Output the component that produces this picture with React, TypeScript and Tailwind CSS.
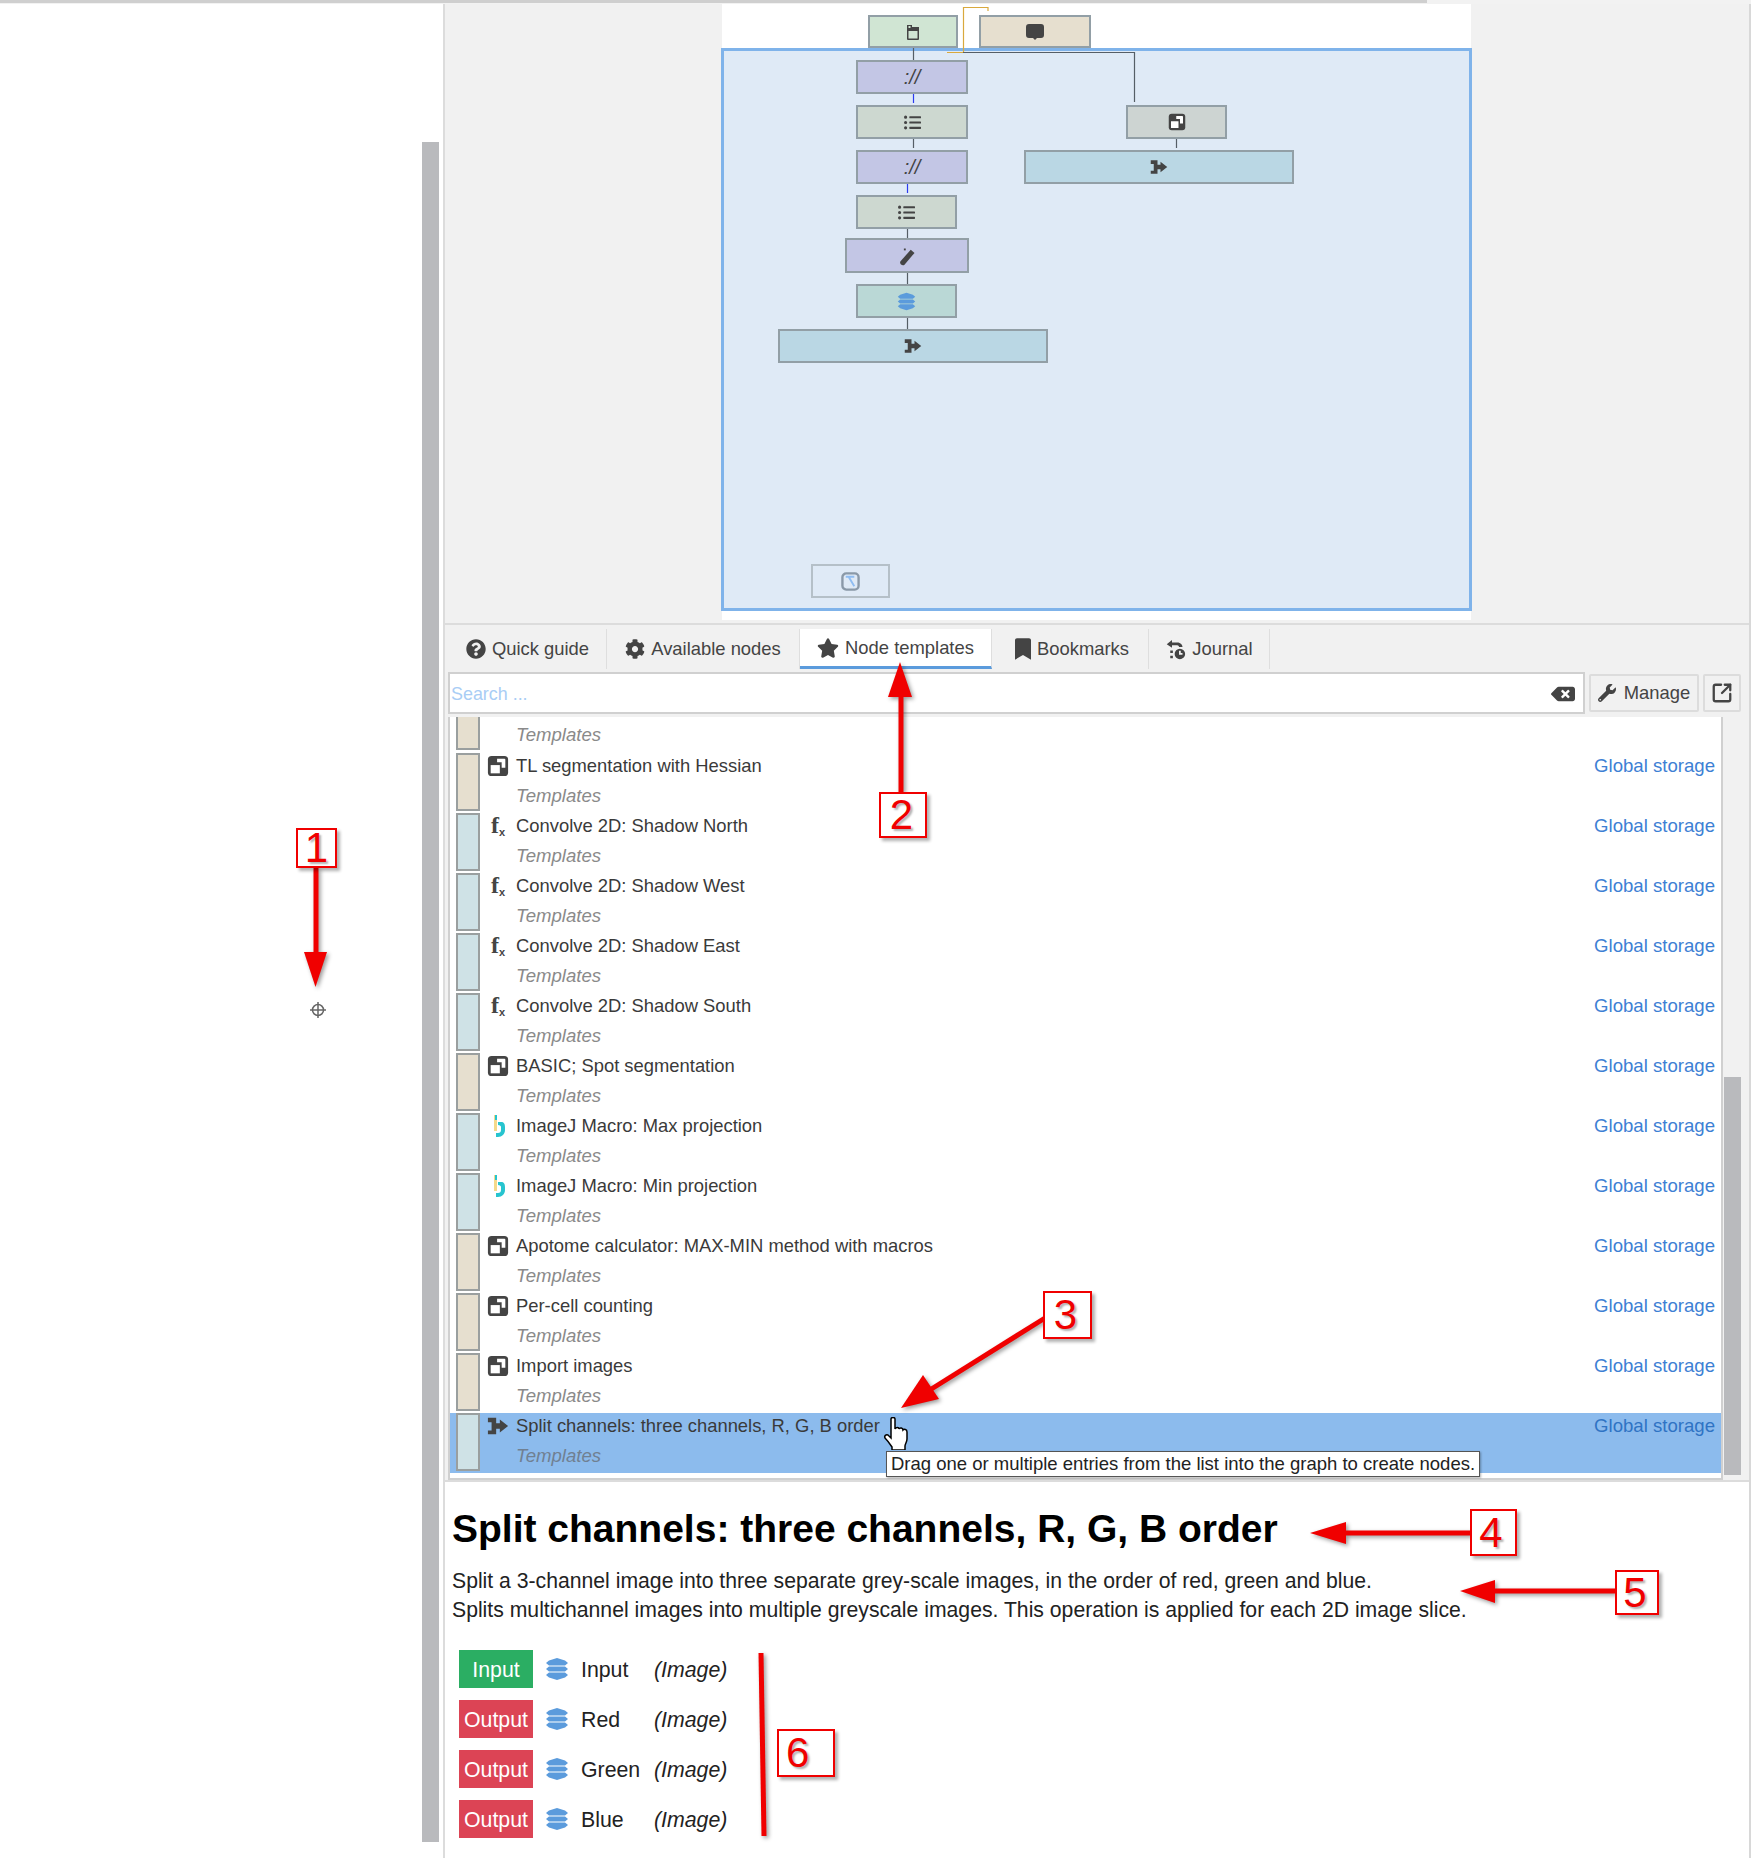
import React from "react";
import {
  FaQuestionCircle,
  FaCog,
  FaStar,
  FaBookmark,
  FaWrench,
  FaBackspace,
  FaListUl,
} from "react-icons/fa";
import { SquareArrowOutUpRight } from "lucide-react";

function GroupIcon({ className }: { className?: string }) {
  return (
    <svg viewBox="0 0 24 24" className={className}>
      <rect x="1" y="1" width="22" height="22" rx="4" fill="currentColor" />
      <path d="M4 11h10v9H4z" fill="#fff" />
      <path d="M11 4h8a1 1 0 0 1 1 1v9h-4V8h-5z" fill="#fff" />
    </svg>
  );
}

function SplitIcon({ className }: { className?: string }) {
  return (
    <svg viewBox="0 0 24 24" className={className}>
      <path
        d="M1 3h9v6h4V5l9 7-9 7v-4h-4v6H1v-4h4V8H1z"
        fill="currentColor"
      />
    </svg>
  );
}

function StackIcon({ className }: { className?: string }) {
  return (
    <svg viewBox="0 0 24 24" className={className}>
      <path d="M12 1l8 2.500L23 6l-3 2.500H4L1 6l3-2.500z" fill="#5b9bdc" />
      <path d="M4 9.500h16l3 2.500-3 2.500H4L1 12z" fill="#5b9bdc" />
      <path d="M4 15.500h16l3 2.500-3 2.500L12 23l-8-2.500L1 18z" fill="#5b9bdc" />
    </svg>
  );
}

function WandIcon() {
  return (
    <svg viewBox="0 0 16 16" className="w-[20px] h-[20px] text-[#444]">
      <path d="M11 3l3 2.500-8 9.500c-1 .8-2 .5-3-.4-.7-.8-.8-1.700 0-2.600z" fill="currentColor" />
      <path d="M5.500 2h1.500v1.500H5.500z" fill="currentColor" />
    </svg>
  );
}

function FxIcon() {
  return (
    <span className="relative block w-[21px] h-[24px] text-[#444]">
      <span className="absolute left-[4px] -top-[1px] text-[24px] leading-[24px] font-['Liberation_Serif',serif] font-bold">
        f
      </span>
      <span className="absolute left-[12px] top-[13px] text-[11px] leading-[11px] font-bold">
        x
      </span>
    </span>
  );
}

function MacroIcon() {
  return (
    <svg viewBox="0 0 21 24" className="w-[21px] h-[24px]">
      <path d="M7 1h3v16H7z" fill="#f5d98a" />
      <path d="M11 8h3c3 0 4 2 4 5v3c0 4-3 7-7 7H9v-4h2c2 0 3-1 3-3v-3c0-1-1-2-3-2z" fill="#27c4cf" />
      <path d="M8 1h2v5H8z" fill="#27c4cf" />
    </svg>
  );
}

function JournalIcon() {
  return (
    <svg viewBox="0 0 24 24" className="w-[21px] h-[21px] text-[#444]">
      <path d="M2 6l6-5v3h6c4 0 6 3 6 5h-4c0-1-1-2-2-2H8v3z" fill="currentColor" />
      <path d="M6 13h3v3H6zM6 19h3v3H6z" fill="currentColor" />
      <circle cx="17" cy="17" r="6" fill="currentColor" />
      <path d="M16 13.500h2V16h2v2h-4z" fill="#f2f2f2" />
    </svg>
  );
}

function FileIcon() {
  return (
    <svg viewBox="0 0 16 16" className="w-[16px] h-[16px] text-[#444]">
      <path d="M2 1h5v2h7v12a1 1 0 0 1-1 1H3a1 1 0 0 1-1-1z" fill="currentColor" />
      <path d="M3.500 7h9v7.500h-9z" fill="#d0e5d3" />
      <path d="M3.500 2h2v2h-2z" fill="#d0e5d3" />
    </svg>
  );
}

function CommentIcon() {
  return (
    <svg viewBox="0 0 18 16" className="w-[18px] h-[16px] text-[#444]">
      <path d="M3 0h12a3 3 0 0 1 3 3v8a3 3 0 0 1-3 3h-4l-2 2-2-2H3a3 3 0 0 1-3-3V3a3 3 0 0 1 3-3z" fill="currentColor" />
    </svg>
  );
}

function GraphNode({ className, children }: { className: string; children?: React.ReactNode }) {
  return (
    <div className={`absolute flex items-center justify-center border-2 border-[#929fa6] text-[#444] ${className}`}>
      {children}
    </div>
  );
}

function Canvas() {
  return (
    <div className="relative w-[749px] h-[616px] bg-white ml-[277px]">
      <div className="absolute -left-[1px] top-[44px] w-[751px] h-[563px] border-[3px] border-[#7fb3ea] bg-[#dfeaf6]" />
      <svg className="absolute left-0 top-0 w-[749px] h-[616px]" fill="none">
        <path d="M241.500 48.500V3.500H266V7M225 48.500h16" stroke="#d9a93d" strokeWidth="1.200" />
        <path d="M191.500 44v12M191.500 135v9M185.500 225v10M185.500 268v12M185.500 313v12M454.500 135v9M241 48.500h171.500V98" stroke="#555e66" strokeWidth="1.200" />
        <path d="M191.500 90v9M185.500 180v9" stroke="#2b3bf0" strokeWidth="1.200" />
      </svg>
      <GraphNode className="left-[146px] top-[11px] w-[90px] h-[33px] bg-[#d0e5d3]"><FileIcon /></GraphNode>
      <GraphNode className="left-[257px] top-[11px] w-[112px] h-[33px] bg-[#e6dfcf]"><CommentIcon /></GraphNode>
      <GraphNode className="left-[134px] top-[56px] w-[112px] h-[34px] bg-[#c3c6e5]"><span className="text-[20px] italic">://</span></GraphNode>
      <GraphNode className="left-[134px] top-[101px] w-[112px] h-[34px] bg-[#cdd8d0]"><FaListUl className="w-[17px] h-[17px]" /></GraphNode>
      <GraphNode className="left-[134px] top-[146px] w-[112px] h-[34px] bg-[#c3c6e5]"><span className="text-[20px] italic">://</span></GraphNode>
      <GraphNode className="left-[134px] top-[191px] w-[101px] h-[34px] bg-[#cdd8d0]"><FaListUl className="w-[17px] h-[17px]" /></GraphNode>
      <GraphNode className="left-[123px] top-[234px] w-[124px] h-[35px] bg-[#c3c6e5]"><WandIcon /></GraphNode>
      <GraphNode className="left-[134px] top-[280px] w-[101px] h-[34px] bg-[#bad8d6]"><StackIcon className="w-[19px] h-[19px]" /></GraphNode>
      <GraphNode className="left-[56px] top-[325px] w-[270px] h-[34px] bg-[#bad7e4]"><SplitIcon className="w-[18px] h-[18px]" /></GraphNode>
      <GraphNode className="left-[404px] top-[101px] w-[101px] h-[34px] bg-[#cdd4d2]"><GroupIcon className="w-[18px] h-[18px]" /></GraphNode>
      <GraphNode className="left-[302px] top-[146px] w-[270px] h-[34px] bg-[#bad7e4]"><SplitIcon className="w-[18px] h-[18px]" /></GraphNode>
      <div className="absolute left-[89px] top-[560px] w-[79px] h-[34px] flex items-center justify-center border-2 border-[#b5c0c8]">
        <svg viewBox="0 0 20 20" className="w-[19px] h-[19px]" fill="none">
          <rect x="1.500" y="1.500" width="17" height="17" rx="4" stroke="#8a99a8" strokeWidth="2.500" />
          <path d="M5 5h9M8 5l6 10" stroke="#8fbdf2" strokeWidth="2" />
        </svg>
      </div>
    </div>
  );
}

const tabs = [
  { label: "Quick guide", icon: <FaQuestionCircle className="w-[20px] h-[20px]" />, width: "w-[160px] pl-[2px]" },
  { label: "Available nodes", icon: <FaCog className="w-[20px] h-[20px]" />, width: "w-[193px]" },
  { label: "Node templates", icon: <FaStar className="w-[22px] h-[22px]" />, width: "w-[192px]", active: true },
  { label: "Bookmarks", icon: <FaBookmark className="w-[16px] h-[22px]" />, width: "w-[157px] pl-[4px]" },
  { label: "Journal", icon: <JournalIcon />, width: "w-[121px]" },
];

type RowKind = "group" | "fx" | "macro" | "split";

const rows: { name: string; kind: RowKind; selected?: boolean }[] = [
  { name: "TL segmentation with Hessian", kind: "group" },
  { name: "Convolve 2D: Shadow North", kind: "fx" },
  { name: "Convolve 2D: Shadow West", kind: "fx" },
  { name: "Convolve 2D: Shadow East", kind: "fx" },
  { name: "Convolve 2D: Shadow South", kind: "fx" },
  { name: "BASIC; Spot segmentation", kind: "group" },
  { name: "ImageJ Macro: Max projection", kind: "macro" },
  { name: "ImageJ Macro: Min projection", kind: "macro" },
  { name: "Apotome calculator: MAX-MIN method with macros", kind: "group" },
  { name: "Per-cell counting", kind: "group" },
  { name: "Import images", kind: "group" },
  { name: "Split channels: three channels, R, G, B order", kind: "split", selected: true },
];

function RowIcon({ kind }: { kind: RowKind }) {
  if (kind === "group") return <GroupIcon className="w-[22px] h-[22px] text-[#444]" />;
  if (kind === "split") return <SplitIcon className="w-[22px] h-[22px] text-[#444]" />;
  if (kind === "macro") return <MacroIcon />;
  return <FxIcon />;
}

function TemplateRow({ name, kind, selected }: { name: string; kind: RowKind; selected?: boolean }) {
  return (
    <div className={`flex h-[60px] pl-[6px] pr-[5px] ${selected ? "bg-[#8cbbed]" : ""}`}>
      <div
        className={`w-[24px] h-[58px] border-2 border-[#9a9f9f] shrink-0 ${
          kind === "group" ? "bg-[#e6dfcf]" : "bg-[#cfe2e6]"
        }`}
      />
      <div className="flex-1 pl-[7px]">
        <div className="flex items-center h-[26px]">
          <div className="w-[29px] shrink-0"><RowIcon kind={kind} /></div>
          <span className="text-[18.4px] text-[#3a3a3a]">{name}</span>
          <span className={`ml-auto mr-[1px] text-[18.6px] ${selected ? "text-[#2f73c4]" : "text-[#3d80d4]"}`}>
            Global storage
          </span>
        </div>
        <div className={`pl-[29px] mt-[4px] text-[18.6px] leading-[26px] italic ${selected ? "text-[#708092]" : "text-[#8a8a8a]"}`}>
          Templates
        </div>
      </div>
    </div>
  );
}

function SlotRow({ badge, name }: { badge: "Input" | "Output"; name: string }) {
  return (
    <div className="flex items-center h-[38px] text-[21.3px] leading-[26px] text-[#222]">
      <div
        className={`flex items-center justify-center w-[74px] h-[38px] pt-[2px] text-white ${
          badge === "Input" ? "bg-[#2bae63]" : "bg-[#dc4455]"
        }`}
      >
        {badge}
      </div>
      <StackIcon className="w-[24px] h-[24px] ml-[12px]" />
      <span className="w-[73px] ml-[12px] pt-[2px]">{name}</span>
      <span className="italic pt-[2px]">(Image)</span>
    </div>
  );
}

function Badge({ className, children }: { className: string; children: React.ReactNode }) {
  return (
    <div
      className={`absolute border-2 border-[#f00000] bg-white text-[#f00000] text-[42px] leading-none flex items-center shadow-[3px_3px_3px_rgba(0,0,0,0.3)] [text-shadow:2px_2px_2px_rgba(0,0,0,0.3)] ${className}`}
    >
      {children}
    </div>
  );
}

function Annotations() {
  return (
    <>
      <svg className="absolute left-0 top-0 w-[1751px] h-[1858px] pointer-events-none drop-shadow-[2px_2px_2px_rgba(0,0,0,0.4)]">
        <g fill="#f00000" stroke="#f00000">
          <path d="M316 868V955" strokeWidth="5" />
          <path d="M304 952h23l-11.500 35z" stroke="none" />
          <path d="M901 792V695" strokeWidth="5" />
          <path d="M888 697h24l-12-35z" stroke="none" />
          <path d="M1045 1318L925 1393" strokeWidth="5" />
          <path d="M901 1408l22-33 16 24z" stroke="none" />
          <path d="M1471 1533H1344" strokeWidth="5" />
          <path d="M1346 1522v22l-36-11z" stroke="none" />
          <path d="M1615 1591H1493" strokeWidth="5" />
          <path d="M1495 1580v23l-35-12z" stroke="none" />
          <path d="M761 1653L764 1836" strokeWidth="5" />
        </g>
      </svg>
      <Badge className="left-[296px] top-[828px] w-[41px] h-[40px] justify-center">1</Badge>
      <Badge className="left-[879px] top-[792px] w-[48px] h-[46px] justify-center pr-[3px]">2</Badge>
      <Badge className="left-[1043px] top-[1291px] w-[49px] h-[48px] justify-center pr-[4px]">3</Badge>
      <Badge className="left-[1470px] top-[1509px] w-[47px] h-[47px] justify-center pr-[5px]">4</Badge>
      <Badge className="left-[1615px] top-[1570px] w-[44px] h-[45px] justify-center pr-[4px]">5</Badge>
      <Badge className="left-[777px] top-[1729px] w-[58px] h-[48px] pl-[7px]">6</Badge>

      <svg viewBox="0 0 16 16" className="absolute left-[310px] top-[1002px] w-[16px] h-[16px]" fill="none" stroke="#666" strokeWidth="1.500">
        <circle cx="8" cy="8" r="5.500" />
        <path d="M8 0v16M0 8h16" />
      </svg>

      {/* hand cursor */}
      <svg viewBox="0 0 26 33" className="absolute left-[883px] top-[1417px] w-[26px] h-[33px]">
        <path
          d="M8 2c0-2 4-2 4 0v10c1-2 4-2 4 0 1-2 4-1 4 1 1-1 4-1 4 2v7c0 3-2 5-2 7v4H9v-3c-2-3-4-6-7-9-1-2 1-4 3-3l3 3z"
          fill="#fff"
          stroke="#000"
          strokeWidth="1.500"
        />
      </svg>

      <div className="absolute left-[886px] top-[1451px] w-[594px] h-[26px] border border-[#555] bg-white pl-[4px] text-[18.5px] leading-[24px] text-[#222] whitespace-nowrap shadow-[1px_1px_2px_rgba(0,0,0,0.3)]">
        Drag one or multiple entries from the list into the graph to create nodes.
      </div>
    </>
  );
}

export default function App() {
  return (
    <div className="relative w-[1751px] h-[1858px] overflow-hidden bg-white font-['Liberation_Sans',Arial,sans-serif]">
      <div className="flex h-[4px] bg-[#f2f2f2]">
        <div className="w-[1427px] h-[3px] bg-[#cfcfcf]" />
      </div>
      <div className="flex h-[1854px]">
        <div className="w-[422px] shrink-0" />
        <div className="w-[17px] shrink-0 pt-[138px] pb-[16px]">
          <div className="h-full bg-[#b9babd]" />
        </div>
        <div className="w-[6px] shrink-0 border-r-2 border-[#dcdcdc]" />

        <div className="flex-1 flex flex-col bg-[#f1f1f1] border-r-2 border-[#d8d8d8]">
          <Canvas />
          <div className="h-[6px] mt-[3px] border-t-2 border-[#dcdcdc]" />

          <div className="flex h-[40px] pl-[2px] items-stretch">
            {tabs.map((t) => (
              <div
                key={t.label}
                className={`flex items-center justify-center gap-[6px] border-r border-[#dedede] text-[18.4px] text-[#444] ${t.width} ${
                  t.active ? "bg-white border-b-[3px] border-b-[#5b9bdc]" : ""
                }`}
              >
                {t.icon}
                <span>{t.label}</span>
              </div>
            ))}
          </div>

          <div className="flex h-[48px] pt-[3px] pl-[3px] pr-[8px] gap-[4px]">
            <div className="flex-1 h-[42px] flex items-center justify-between bg-white border-2 border-[#d0d0d0] pl-[1px] pr-[8px] pt-[2px]">
              <span className="text-[17.9px] text-[#a9cdf5]">Search ...</span>
              <FaBackspace className="w-[24px] h-[20px] text-[#444]" />
            </div>
            <div className="w-[110px] h-[38px] mt-[2px] flex items-center justify-center gap-[8px] border-2 border-[#dcdcdc] rounded-[2px] text-[18.4px] text-[#444]">
              <FaWrench className="w-[18px] h-[18px]" />
              <span>Manage</span>
            </div>
            <div className="w-[38px] h-[38px] mt-[2px] flex items-center justify-center border-2 border-[#dcdcdc] rounded-[2px]">
              <SquareArrowOutUpRight className="w-[22px] h-[22px] text-[#444]" strokeWidth={2.5} />
            </div>
          </div>

          <div className="flex h-[763px] pl-[3px]">
            <div className="flex-1 bg-white border-l-2 border-r-2 border-b-2 border-[#d0d0d0]">
              <div className="flex h-[36px] pl-[6px]">
                <div className="w-[24px] h-[33px] border-2 border-t-0 border-[#9a9f9f] bg-[#e6dfcf]" />
                <div className="pl-[36px] mt-[5px] text-[18.6px] leading-[26px] italic text-[#8a8a8a]">Templates</div>
              </div>
              {rows.map((r) => (
                <TemplateRow key={r.name} {...r} />
              ))}
            </div>
            <div className="w-[26px] shrink-0 pt-[360px] pr-[8px] pl-[1px]">
              <div className="h-[398px] bg-[#b9babd]" />
            </div>
          </div>

          <div className="flex-1 bg-white border-t-2 border-[#dcdcdc] pl-[7px] pt-[25px]">
            <h1 className="text-[39px] leading-[44px] font-bold text-black">
              Split channels: three channels, R, G, B order
            </h1>
            <p className="mt-[15px] text-[21.2px] leading-[29px] text-[#222]">
              Split a 3-channel image into three separate grey-scale images, in the order of red, green and blue.
              <br />
              Splits multichannel images into multiple greyscale images. This operation is applied for each 2D image slice.
            </p>
            <div className="mt-[26px] ml-[7px] flex flex-col gap-[12px]">
              <SlotRow badge="Input" name="Input" />
              <SlotRow badge="Output" name="Red" />
              <SlotRow badge="Output" name="Green" />
              <SlotRow badge="Output" name="Blue" />
            </div>
          </div>
        </div>
      </div>
      <Annotations />
    </div>
  );
}
